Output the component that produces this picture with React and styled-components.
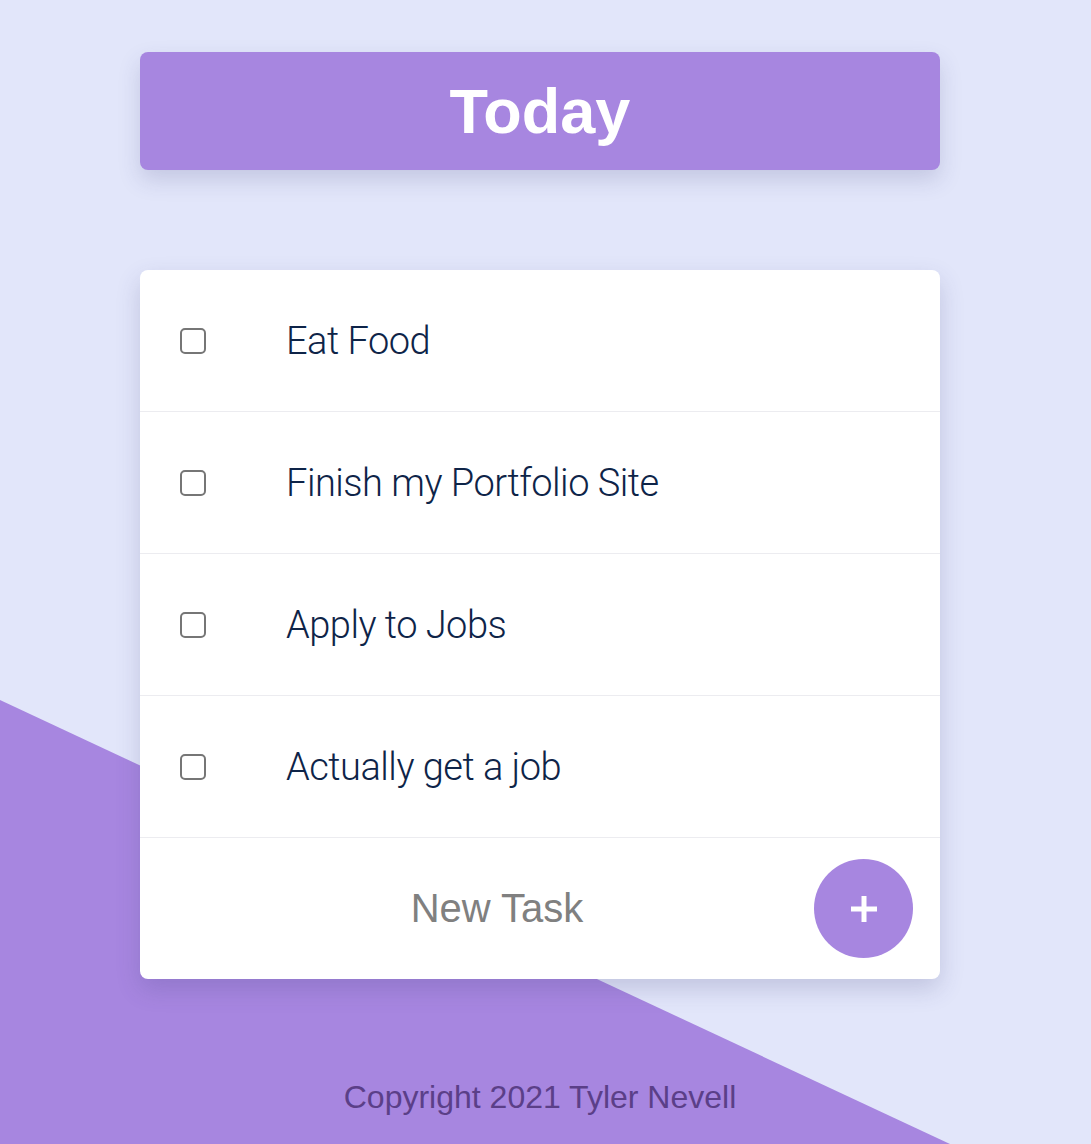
import React from 'react';
import styled, {createGlobalStyle} from 'styled-components';

const GlobalStyle = createGlobalStyle`
    html, body {
        margin: 0;
        padding: 0;
        background: #e2e6fa;
    }
`;

const Page = styled.main`
    position: relative;
    min-height: 1144px;
    display: flex;
    flex-direction: column;
    align-items: center;
    padding: 52px 11px 0 0;
    box-sizing: border-box;
    overflow: hidden;
    font-family: "Liberation Sans", Arial, sans-serif;

    &::before {
        content: '';
        position: absolute;
        inset: 0;
        background: #a786e0;
        clip-path: polygon(0 700px, 950px 100%, 0 100%);
        z-index: 0;
    }

    > * {
        position: relative;
        z-index: 1;
    }
`;

const Header = styled.header`
    width: 800px;
    height: 118px;
    background: #a786e0;
    border-radius: 8px;
    box-shadow: 0 10px 22px rgba(60, 60, 120, 0.18);
    display: flex;
    align-items: center;
    justify-content: center;

    h1 {
        margin: 0;
        color: white;
        font-size: 63px;
        font-weight: 700;
    }
`;

const List = styled.section`
    margin-top: 100px;
    width: 800px;
    background: white;
    border-radius: 8px;
    box-shadow: 0 10px 24px rgba(60, 60, 120, 0.2);
    overflow: hidden;
`;

const Row = styled.label`
    display: flex;
    align-items: center;
    height: 141px;
    border-bottom: 1px solid #ececf0;
    cursor: pointer;
`;

const Check = styled.input`
    appearance: none;
    margin: 0 80px 0 40px;
    width: 26px;
    height: 26px;
    border: 2px solid #767676;
    border-radius: 5px;
    box-sizing: border-box;
    background: white;
`;

const Task = styled.span`
    font-family: Roboto, "Liberation Sans", sans-serif;
    font-weight: 300;
    font-size: 38px;
    letter-spacing: -0.5px;
    color: #0e2448;
`;

const NewRow = styled.div`
    display: flex;
    align-items: center;
    height: 141px;
    padding-right: 27px;
`;

const NewInput = styled.input`
    flex: 1;
    min-width: 0;
    border: none;
    outline: none;
    background: transparent;
    padding: 0 0 0 40px;
    text-align: center;
    font-family: "Liberation Sans", Arial, sans-serif;
    font-size: 40px;
    color: #808080;

    &::placeholder {
        color: #808080;
    }
`;

const AddButton = styled.button`
    width: 99px;
    height: 99px;
    border-radius: 50%;
    border: none;
    background: #a786e0;
    display: flex;
    align-items: center;
    justify-content: center;
    cursor: pointer;
`;

const Footer = styled.footer`
    margin-top: 100px;
    font-size: 32px;
    color: #5b3f88;
`;

const tasks = ['Eat Food', 'Finish my Portfolio Site', 'Apply to Jobs', 'Actually get a job'];

export default function App() {
    return (
        <>
            <GlobalStyle />
            <Page>
                <Header>
                    <h1>Today</h1>
                </Header>
                <List>
                    {tasks.map((task) => (
                        <Row key={task}>
                            <Check type="checkbox" />
                            <Task>{task}</Task>
                        </Row>
                    ))}
                    <NewRow>
                        <NewInput placeholder="New Task" />
                        <AddButton aria-label="Add task">
                            <svg width="30" height="30" viewBox="0 0 30 30">
                                <path d="M15 2v26M2 15h26" stroke="white" strokeWidth="5" />
                            </svg>
                        </AddButton>
                    </NewRow>
                </List>
                <Footer>Copyright 2021 Tyler Nevell</Footer>
            </Page>
        </>
    );
}
